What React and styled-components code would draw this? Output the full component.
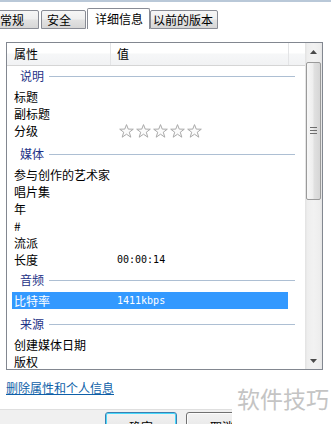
import React from 'react';
import styled, { createGlobalStyle } from 'styled-components';

const Global = createGlobalStyle`
  html, body { margin: 0; padding: 0; background: #fff; }
  body {
    width: 331px; height: 424px; overflow: hidden;
    font-family: "Noto Sans CJK SC", "Noto Sans", sans-serif;
    font-size: 12px; color: #000;
  }
`;

const Window = styled.div`
  position: relative;
  width: 331px;
  height: 424px;
  overflow: hidden;
  display: flex;
  flex-direction: column;
  background: #fff;
`;

const TopBand = styled.div`
  flex: none;
  height: 2px;
  background: #b9c8d8;
`;

const TabStrip = styled.div`
  flex: none;
  height: 27px;
  display: flex;
  align-items: flex-end;
  margin-left: -6px;
`;

const Tab = styled.div`
  box-sizing: border-box;
  width: ${p => p.$w}px;
  margin-left: ${p => p.$ml || 0}px;
  padding-left: ${p => p.$pl}px;
  height: ${p => (p.$active ? 21 : 19)}px;
  line-height: ${p => (p.$active ? 19 : 17)}px;
  font-size: 12px;
  border: 1px solid #898c95;
  border-bottom: ${p => (p.$active ? 'none' : '1px solid #898c95')};
  border-radius: 2px 2px 0 0;
  white-space: nowrap;
  background: ${p =>
    p.$active
      ? '#fff'
      : 'linear-gradient(#f6f6f6 0%, #efefef 45%, #e2e2e2 55%, #d6d6d6 100%)'};
`;

const Panel = styled.div`
  flex: 1;
  display: flex;
  flex-direction: column;
  padding: 13px 8px 0 6px;
  min-height: 0;
`;

const List = styled.div`
  box-sizing: border-box;
  height: 328px;
  border: 1px solid #828790;
  display: flex;
  flex: none;
`;

const Main = styled.div`
  flex: 1;
  display: flex;
  flex-direction: column;
  overflow: hidden;
`;

const Header = styled.div`
  box-sizing: border-box;
  flex: none;
  height: 23px;
  display: flex;
  border-bottom: 1px solid #d5d5d5;
  background: linear-gradient(#ffffff 0%, #ffffff 45%, #f6f7f8 50%, #f1f2f4 100%);
`;

const HeadCell = styled.div`
  box-sizing: border-box;
  width: ${p => (p.$w ? `${p.$w}px` : 'auto')};
  flex: ${p => (p.$w ? 'none' : 1)};
  padding-left: ${p => p.$pl || 0}px;
  line-height: 22px;
  border-right: ${p => (p.$last ? 'none' : '1px solid #e3e4e6')};
`;

const Body = styled.div`
  flex: 1;
  display: flex;
  flex-direction: column;
  overflow: hidden;
`;

const Group = styled.div`
  box-sizing: border-box;
  flex: none;
  height: ${p => p.$h}px;
  display: flex;
  align-items: flex-end;
  padding: 0 10px 4px 13px;
`;

const GroupInner = styled.div`
  flex: 1;
  height: 16px;
  display: flex;
  align-items: center;
  gap: 5px;
`;

const GroupLabel = styled.span`
  color: #1e3287;
  line-height: 16px;
`;

const GroupLine = styled.div`
  flex: 1;
  height: 1px;
  background: #adbfd3;
`;

const Row = styled.div`
  flex: none;
  height: 17px;
  display: flex;
  align-items: center;
  margin: 0 17px 0 5px;
  padding-left: 2px;
  background: ${p => (p.$selected ? '#3399ff' : 'transparent')};
  color: ${p => (p.$selected ? '#fff' : '#000')};
`;

const RowLabel = styled.span`
  width: 103px;
  flex: none;
  white-space: nowrap;
  line-height: 17px;
`;

const RowValue = styled.span`
  font-family: "DejaVu Sans Mono", "Liberation Mono", monospace;
  font-size: 10px;
  line-height: 17px;
  white-space: nowrap;
`;

const Stars = styled.div`
  display: flex;
  gap: 2px;
  margin-left: 2px;
`;

const Scrollbar = styled.div`
  width: 17px;
  flex: none;
  display: flex;
  flex-direction: column;
  background: linear-gradient(to right, #e2e2e2 0%, #eeeeee 15%, #f2f2f2 50%, #eeeeee 85%, #e6e6e6 100%);
`;

const ScrollButton = styled.div`
  flex: none;
  height: 17px;
  display: flex;
  align-items: center;
  justify-content: center;
  margin-top: ${p => (p.$bottom ? 'auto' : '0')};
`;

const Thumb = styled.div`
  box-sizing: border-box;
  flex: none;
  margin: 2px 1px 0 1px;
  height: 138px;
  border: 1px solid #9a9a9a;
  border-radius: 2px;
  background: linear-gradient(to right, #f7f7f7 0%, #eeeeee 45%, #e0e0e0 55%, #d6d6d6 100%);
  display: flex;
  align-items: center;
  justify-content: center;
`;

const Grip = styled.div`
  width: 7px;
  height: 7px;
  background: repeating-linear-gradient(#6e6e6e 0 1px, transparent 1px 3px);
  margin-top: -2px;
`;

const LinkRow = styled.div`
  margin-top: 11px;
  line-height: 14px;
`;

const Link = styled.a`
  color: #0e5fa8;
  text-decoration: underline;
  cursor: pointer;
`;

const Footer = styled.div`
  flex: none;
  height: 15px;
  box-sizing: border-box;
  border-top: 1px solid #dfdfdf;
  background: #f0f0f0;
  display: flex;
  gap: 9px;
  padding: 2px 0 0 105px;
`;

const Button = styled.div`
  box-sizing: border-box;
  flex: none;
  width: 72px;
  height: 23px;
  border: 1px solid ${p => (p.$default ? '#3c7fb1' : '#707070')};
  border-radius: 3px;
  background: linear-gradient(#f2f2f2 0%, #ebebeb 50%, #dddddd 50%, #cfcfcf 100%);
  box-shadow: ${p => (p.$default ? 'inset 0 0 0 1px #48d8fb' : 'inset 0 0 0 1px #fcfcfc')};
  text-align: center;
  line-height: 21px;
  padding-top: 3px;
`;

const Watermark = styled.div`
  position: absolute;
  left: 232px;
  top: 376px;
  right: 0;
  bottom: 0;
  background: #fff;
  padding: 11px 0 0 5px;
  font-size: 23px;
  line-height: 1;
  color: #c4c4c4;
  white-space: nowrap;
`;

const StarIcon = () => (
  <svg width="15" height="14" viewBox="0 0 15 14">
    <path
      d="M7.5 0.6 L9.25 5.1 L14.3 5.2 L10.3 8.2 L11.8 13.2 L7.5 10.2 L3.2 13.2 L4.7 8.2 L0.7 5.2 L5.75 5.1 Z"
      fill="#fbfbfb"
      stroke="#a9a9a9"
      strokeWidth="1"
      strokeLinejoin="round"
    />
  </svg>
);

const Arrow = ({ up }) => (
  <svg width="7" height="4" viewBox="0 0 7 4">
    <path d={up ? 'M0 4 L3.5 0 L7 4 Z' : 'M0 0 L3.5 4 L7 0 Z'} fill="#4a4a4a" />
  </svg>
);

const GroupHead = ({ label, h }) => (
  <Group $h={h}>
    <GroupInner>
      <GroupLabel>{label}</GroupLabel>
      <GroupLine />
    </GroupInner>
  </Group>
);

const Prop = ({ label, value, selected, children }) => (
  <Row $selected={selected}>
    <RowLabel>{label}</RowLabel>
    {value && <RowValue>{value}</RowValue>}
    {children}
  </Row>
);

export default function App() {
  return (
    <Window>
      <Global />
      <TopBand />
      <TabStrip>
        <Tab $w={45} $pl={5}>常规</Tab>
        <Tab $w={45} $pl={5} $ml={2}>安全</Tab>
        <Tab $w={63} $pl={7} $ml={1} $active>详细信息</Tab>
        <Tab $w={68} $pl={2}>以前的版本</Tab>
      </TabStrip>
      <Panel>
        <List>
          <Main>
            <Header>
              <HeadCell $w={104} $pl={7}>属性</HeadCell>
              <HeadCell $w={178} $pl={6}>值</HeadCell>
              <HeadCell $last />
            </Header>
            <Body>
              <GroupHead label="说明" h={22} />
              <Prop label="标题" />
              <Prop label="副标题" />
              <Prop label="分级">
                <Stars>
                  {[0, 1, 2, 3, 4].map(i => (
                    <StarIcon key={i} />
                  ))}
                </Stars>
              </Prop>
              <GroupHead label="媒体" h={27} />
              <Prop label="参与创作的艺术家" />
              <Prop label="唱片集" />
              <Prop label="年" />
              <Prop label="#" />
              <Prop label="流派" />
              <Prop label="长度" value="00:00:14" />
              <GroupHead label="音频" h={24} />
              <Prop label="比特率" value="1411kbps" selected />
              <GroupHead label="来源" h={27} />
              <Prop label="创建媒体日期" />
              <Prop label="版权" />
            </Body>
          </Main>
          <Scrollbar>
            <ScrollButton>
              <Arrow up />
            </ScrollButton>
            <Thumb>
              <Grip />
            </Thumb>
            <ScrollButton $bottom>
              <Arrow />
            </ScrollButton>
          </Scrollbar>
        </List>
        <LinkRow>
          <Link>删除属性和个人信息</Link>
        </LinkRow>
      </Panel>
      <Footer>
        <Button $default>确定</Button>
        <Button>取消</Button>
      </Footer>
      <Watermark>软件技巧</Watermark>
    </Window>
  );
}
